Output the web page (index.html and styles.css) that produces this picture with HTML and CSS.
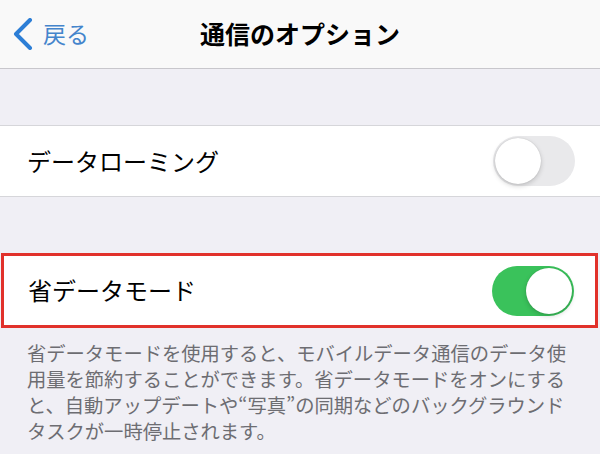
FILE: index.html
```html
<!DOCTYPE html>
<html lang="ja">
<head>
  <meta charset="UTF-8">
  <meta name="viewport" content="width=device-width, initial-scale=1.0">
  <title>通信のオプション</title>
  <link rel="stylesheet" href="styles.css">
</head>
<body>
  <header class="navbar">
    <a class="back" href="#">
      <svg class="chevron" width="20" height="32" viewBox="0 0 20 32">
        <path d="M17 2 L3 16 L17 30" fill="none" stroke="currentColor" stroke-width="4" stroke-linecap="round" stroke-linejoin="round"/>
      </svg>
      <span>戻る</span>
    </a>
    <h1>通信のオプション</h1>
    <div></div>
  </header>

  <div class="spacer"></div>

  <section class="group">
    <div class="row">
      <span class="label">データローミング</span>
      <div class="toggle"><div class="knob"></div></div>
    </div>
  </section>

  <div class="spacer"></div>

  <section class="group highlight">
    <div class="row">
      <span class="label">省データモード</span>
      <div class="toggle on"><div class="knob"></div></div>
    </div>
  </section>

  <p class="note">省データモードを使用すると、モバイルデータ通信のデータ使用量を節約することができます。省データモードをオンにすると、自動アップデートや“写真”の同期などのバックグラウンドタスクが一時停止されます。</p>
</body>
</html>
```

FILE: styles.css
```css
* {
  box-sizing: border-box;
  margin: 0;
  padding: 0;
}
html {
  background-color: #f0eff5;
}
body {
  font-family: "Noto Sans CJK JP", "Noto Sans", sans-serif;
  color: #000;
  width: 600px;
  height: 454px;
  overflow: hidden;
}
.navbar {
  height: 69px;
  background-color: #f9f9f9;
  border-bottom: 1px solid #c8c7cc;
  display: grid;
  grid-template-columns: 1fr auto 1fr;
  align-items: center;
}
.back {
  display: flex;
  align-items: center;
  gap: 10px;
  padding-left: 13px;
  color: #2c7ed6;
  text-decoration: none;
  font-size: 23px;
}
.back span {
  color: #4485cc;
  margin-top: -2px;
}
.chevron {
  display: block;
}
.navbar h1 {
  font-size: 25px;
  font-weight: 700;
  letter-spacing: 0;
  margin-top: -2px;
}
.spacer {
  height: 56px;
}
.group {
  background-color: #fff;
  border-top: 1px solid #d6d6da;
  border-bottom: 1px solid #d6d6da;
}
.row {
  height: 70px;
  display: flex;
  align-items: center;
  justify-content: space-between;
  padding: 0 25px 0 27px;
}
.label {
  font-size: 24px;
  margin-top: -2px;
}
.highlight {
  border: 3px solid #e1312b;
  margin: 0 2px 0 1px;
}
.highlight .row {
  height: 69px;
  padding: 0 21px 0 24px;
}
.toggle {
  width: 82px;
  height: 50px;
  border-radius: 25px;
  background-color: #e9e9eb;
  padding: 2px;
  display: flex;
}
.knob {
  width: 46px;
  height: 46px;
  border-radius: 50%;
  background-color: #fff;
  box-shadow: 0 2px 5px rgba(0, 0, 0, 0.18), 0 0 1px rgba(0, 0, 0, 0.2);
}
.toggle.on {
  background-color: #3ac25b;
  justify-content: flex-end;
}
.note {
  padding: 12px 30px 0 27px;
  font-size: 19.3px;
  line-height: 26px;
  color: #6d6d72;
}
```
